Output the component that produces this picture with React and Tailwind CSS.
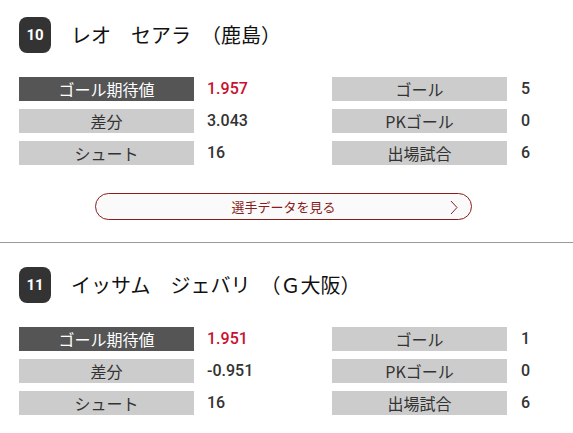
import React from 'react';

const players = [
  {
    no: 10,
    name: 'レオ　セアラ　（鹿島）',
    stats: [
      ['ゴール期待値', '1.957', 'ゴール', '5'],
      ['差分', '3.043', 'PKゴール', '0'],
      ['シュート', '16', '出場試合', '6'],
    ],
  },
  {
    no: 11,
    name: 'イッサム　ジェバリ　（Ｇ大阪）',
    stats: [
      ['ゴール期待値', '1.951', 'ゴール', '1'],
      ['差分', '-0.951', 'PKゴール', '0'],
      ['シュート', '16', '出場試合', '6'],
    ],
  },
];

const jp = "font-['Noto_Sans_CJK_JP','Noto_Sans',sans-serif]";
const num = "font-['Roboto','Noto_Sans_CJK_JP',sans-serif]";

const Label = ({ text, dark }) => (
  <div
    className={`h-6 flex items-center justify-center text-[16px] leading-none ${jp} ${
      dark ? 'bg-[#555555] text-white' : 'bg-[#cccccc] text-[#333333]'
    }`}
  >
    {text}
  </div>
);

const Value = ({ text, red, right }) => (
  <div
    className={`h-6 flex items-center text-[16px] font-medium leading-none ${num} ${
      right ? 'pl-[14px]' : 'pl-[13px]'
    } ${red ? 'text-[#c8102e]' : 'text-[#333333]'}`}
  >
    {text}
  </div>
);

const PlayerBlock = ({ player, first }) => (
  <section className={`${first ? 'pt-[17px] pb-[22px] border-b border-[#999999]' : 'pt-6'}`}>
    {/* Header */}
    <div className="flex items-center pl-[19px]">
      <div className="w-8 h-9 rounded-[8px] bg-[#333333] text-white flex items-center justify-center text-[15px] font-bold font-['Roboto','Liberation_Sans',sans-serif]">
        {player.no}
      </div>
      <h2 className={`ml-5 text-[20px] leading-none text-[#111111] ${jp}`}>{player.name}</h2>
    </div>

    {/* Stats */}
    <div className="mt-6 pl-[19px] grid grid-cols-[175px_138px_175px_1fr] gap-y-2">
      {player.stats.map((row, i) => (
        <React.Fragment key={i}>
          <Label text={row[0]} dark={i === 0} />
          <Value text={row[1]} red={i === 0} />
          <Label text={row[2]} />
          <Value text={row[3]} right />
        </React.Fragment>
      ))}
    </div>

    {first && (
      <button className="mt-[28px] ml-[95px] w-[377px] h-[27px] rounded-full border border-[#8b1c1c] bg-[#fafafa] flex items-center relative">
        <span className={`flex-1 text-center text-[13px] text-[#8b1c1c] ${jp}`}>選手データを見る</span>
        <svg className="absolute right-[13px] top-[6px]" width="8" height="15" viewBox="0 0 8 15" fill="none">
          <path d="M1 1l6 6.5L1 14" stroke="#8b1c1c" strokeWidth="1" />
        </svg>
      </button>
    )}
  </section>
);

const App = () => {
  return (
    <div className="w-[573px] h-[433px] bg-white overflow-hidden">
      {players.map((p, i) => (
        <PlayerBlock key={p.no} player={p} first={i === 0} />
      ))}
    </div>
  );
};

export default App;
